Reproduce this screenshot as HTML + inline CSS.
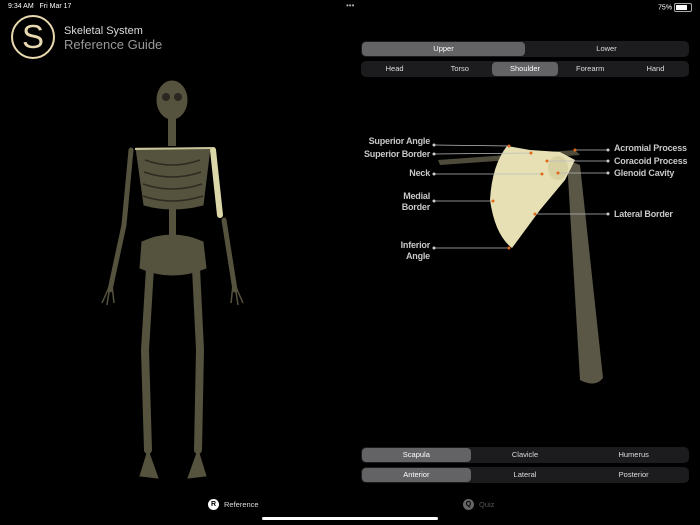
<!DOCTYPE html>
<html><head><style>
body{margin:0;width:700px;height:525px;background:#000;overflow:hidden;font-family:"Liberation Sans",sans-serif;position:relative;color:#fff}
.a{position:absolute}
.seg{position:absolute;background:#1c1c1e;border-radius:5px;display:flex;font-size:7.5px;color:#ddd;height:16px;box-sizing:border-box;padding:1px}
.seg div{flex:1;text-align:center;line-height:14px;height:14px}
.seg .on{background:#636366;border-radius:4px;color:#fff}
.lbl{position:absolute;font-size:9px;font-weight:bold;color:#c8c8c8;line-height:11px;letter-spacing:-0.2px}
</style></head><body>
<div class="a" style="left:8px;top:3px;font-size:7px;color:#fff">9:34 AM&nbsp;&nbsp; Fri Mar 17</div>
<div class="a" style="left:346px;top:1px;font-size:8px;color:#aaa">•••</div>
<div class="a" style="right:8px;top:3px;font-size:7px;color:#fff">75% <span style="display:inline-block;width:16px;height:7px;border:1px solid #aaa;border-radius:2px;vertical-align:middle;position:relative"><span style="position:absolute;left:1px;top:1px;width:11px;height:5px;background:#fff"></span></span></div>
<div class="a" style="left:11px;top:15px;width:40px;height:40px;border:2px solid #e8d9b0;border-radius:50%;text-align:center;font-size:33px;line-height:40px;color:#e8d9b0;font-weight:300">S</div>
<div class="a" style="left:64px;top:25px;font-size:11px;color:#ddd">Skeletal System</div>
<div class="a" style="left:64px;top:37px;font-size:13px;color:#999">Reference Guide</div>

<svg class="a" style="left:0;top:0" width="700" height="525">
<g fill="#55523e" stroke="#55523e">
<ellipse cx="172" cy="100" rx="15" ry="19"/>
<rect x="168" y="118" width="8" height="28" stroke="none"/>
<path d="M136 148 L210 148 L203 205 Q172 213 144 205 Z"/>
<rect x="169" y="205" width="7" height="35" stroke="none"/>
<path d="M142 242 Q172 228 203 242 L206 268 Q172 282 140 268 Z"/>
<path d="M131 150 L124 225 L110 290" stroke-width="5" fill="none" stroke-linecap="round"/>
<path d="M110 285 l-8 18 M110 285 l-3 20 M112 285 l2 18" stroke-width="1.5" fill="none"/>
<path d="M224 220 L235 290" stroke-width="5" fill="none" stroke-linecap="round"/>
<path d="M235 285 l8 18 M235 285 l3 20 M233 285 l-2 18" stroke-width="1.5" fill="none"/>
<path d="M150 268 L145 350 L148 450" stroke-width="8" fill="none" stroke-linecap="round"/>
<path d="M196 268 L200 350 L198 450" stroke-width="8" fill="none" stroke-linecap="round"/>
<path d="M148 450 L140 476 L158 478 Z M198 450 L206 476 L188 478 Z"/>
</g>
<g stroke="#2e2c20" stroke-width="1.5" fill="none">
<path d="M145 160 Q172 170 200 160 M144 172 Q172 182 201 172 M143 184 Q172 194 202 184 M143 196 Q172 206 203 196"/>
</g>
<ellipse cx="166" cy="97" rx="4" ry="4" fill="#2a2820"/><ellipse cx="178" cy="97" rx="4" ry="4" fill="#2a2820"/>
<path d="M213 150 L220 215" stroke="#dcd7a8" stroke-width="6" stroke-linecap="round"/>
<path d="M135 149 L212 148" stroke="#c8c49a" stroke-width="2"/>
<!-- shoulder -->
<path d="M438 160 L575 150 L580 155 L440 165 Z" fill="#4e4b3a"/>
<path d="M567 160 L580 165 L603 378 Q595 388 580 380 Z" fill="#5a5746"/>
<path d="M507 146 L530 150 L560 152 L575 160 L565 180 L540 210 L512 248 Q495 235 490 200 Q492 165 507 146 Z" fill="#e6e0b4"/>
<ellipse cx="558" cy="168" rx="10" ry="12" fill="#d8d1a2"/>
<g stroke="#bbb" stroke-width="0.8" fill="none">
<path d="M434 145 L509 146 M434 154 L531 153 M434 174 L542 174 M434 201 L493 201 M434 248 L509 248 M608 150 L575 150 M608 161 L547 161 M608 173 L558 173 M608 214 L535 214"/>
</g>
<g fill="#ccc"><circle cx="434" cy="145" r="1.5"/><circle cx="434" cy="154" r="1.5"/><circle cx="434" cy="174" r="1.5"/><circle cx="434" cy="201" r="1.5"/><circle cx="434" cy="248" r="1.5"/><circle cx="608" cy="150" r="1.5"/><circle cx="608" cy="161" r="1.5"/><circle cx="608" cy="173" r="1.5"/><circle cx="608" cy="214" r="1.5"/></g>
<g fill="#e06a1a"><circle cx="509" cy="146" r="1.5"/><circle cx="531" cy="153" r="1.5"/><circle cx="542" cy="174" r="1.5"/><circle cx="493" cy="201" r="1.5"/><circle cx="509" cy="248" r="1.5"/><circle cx="575" cy="150" r="1.5"/><circle cx="547" cy="161" r="1.5"/><circle cx="558" cy="173" r="1.5"/><circle cx="535" cy="214" r="1.5"/></g>
</svg>
<div class="lbl" style="right:270px;top:136px">Superior Angle</div>
<div class="lbl" style="right:270px;top:149px">Superior Border</div>
<div class="lbl" style="right:270px;top:168px">Neck</div>
<div class="lbl" style="right:270px;top:191px;text-align:right">Medial<br>Border</div>
<div class="lbl" style="right:270px;top:240px;text-align:right">Inferior<br>Angle</div>
<div class="lbl" style="left:614px;top:143px">Acromial Process</div>
<div class="lbl" style="left:614px;top:156px">Coracoid Process</div>
<div class="lbl" style="left:614px;top:168px">Glenoid Cavity</div>
<div class="lbl" style="left:614px;top:209px">Lateral Border</div>

<div class="seg" style="left:361px;top:41px;width:328px"><div class="on">Upper</div><div>Lower</div></div>
<div class="seg" style="left:361px;top:61px;width:328px"><div>Head</div><div>Torso</div><div class="on">Shoulder</div><div>Forearm</div><div>Hand</div></div>
<div class="seg" style="left:361px;top:447px;width:328px"><div class="on">Scapula</div><div>Clavicle</div><div>Humerus</div></div>
<div class="seg" style="left:361px;top:467px;width:328px"><div class="on">Anterior</div><div>Lateral</div><div>Posterior</div></div>

<div class="a" style="left:208px;top:499px;width:11px;height:11px;border-radius:50%;background:#fff;color:#000;font-size:7px;font-weight:bold;text-align:center;line-height:11px">R</div>
<div class="a" style="left:224px;top:500px;font-size:7.5px;color:#ddd">Reference</div>
<div class="a" style="left:463px;top:499px;width:11px;height:11px;border-radius:50%;background:#666;color:#000;font-size:7px;font-weight:bold;text-align:center;line-height:11px">Q</div>
<div class="a" style="left:479px;top:500px;font-size:7.5px;color:#555">Quiz</div>
<div class="a" style="left:262px;top:517px;width:176px;height:3px;border-radius:2px;background:#fff"></div>
</body></html>
